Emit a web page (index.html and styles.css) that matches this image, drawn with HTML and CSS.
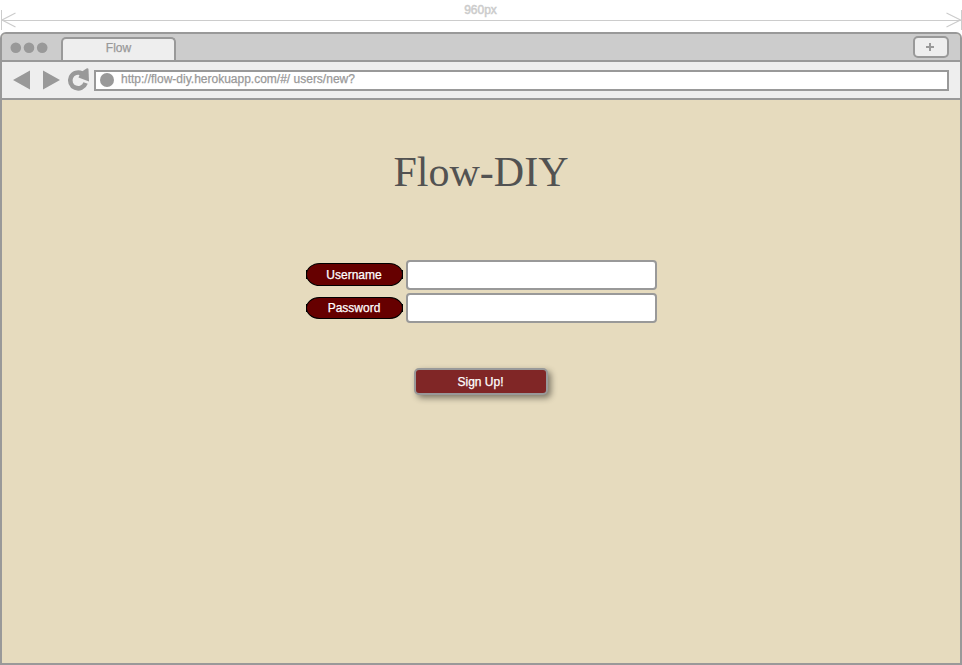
FILE: index.html
```html
<!DOCTYPE html>
<html lang="en">
<head>
<meta charset="utf-8">
<title>Flow</title>
<link rel="stylesheet" href="styles.css">
</head>
<body>
<div class="ruler">
  <svg class="ruler-line" width="962" height="32" viewBox="0 0 962 32" fill="none" stroke="#ccc">
    <path d="M1.5 10V30M961.5 10V30M2 20.5H961"/>
    <path d="M15.5 13L2 20L15.5 27M946.500 13L960.500 20L946.500 27" stroke-width="1.2"/>
  </svg>
  <span class="ruler-label">960px</span>
</div>
<div class="browser">
  <header class="tabs">
    <svg class="dots" width="51" height="26" viewBox="2 34 51 26" fill="#999"><circle cx="15.800" cy="47.800" r="5.300"/><circle cx="29" cy="47.800" r="5.300"/><circle cx="42.200" cy="47.800" r="5.300"/></svg>
    <div class="tab">Flow</div>
    <button class="new-tab" aria-label="New tab"><svg width="8" height="8" viewBox="0 0 8 8"><path d="M0 4H8M4 0V8" stroke="#999" stroke-width="2"/></svg></button>
  </header>
  <nav class="toolbar">
    <svg class="controls" width="92" height="36" viewBox="2 62 92 36">
      <path d="M13 80L30 70.500V89.500ZM60 80L43 70.500V89.500Z" fill="#999"/>
      <path d="M82 73.500A7.900 7.900 0 1 0 85.600 83" fill="none" stroke="#999" stroke-width="4.600"/>
      <path d="M78.500 77.500L80.500 72.500L86.500 68.500Q88.300 67.500 88.500 69.500L89 81.500Z" fill="#999"/>
    </svg>
    <div class="address"><i class="favicon"></i><span>http://flow-diy.herokuapp.com/#/ users/new?</span></div>
  </nav>
  <main class="page">
    <h1>Flow-DIY</h1>
    <form class="signup">
      <div class="row"><label class="pill" for="username">Username</label><input id="username" type="text"></div>
      <div class="row"><label class="pill pill-short" for="password">Password</label><input id="password" type="password"></div>
      <button class="submit" type="button">Sign Up!</button>
    </form>
  </main>
</div>
</body>
</html>
```

FILE: styles.css
```css
* { box-sizing: border-box; }
body {
  margin: 0;
  width: 962px;
  height: 665px;
  overflow: hidden;
  background: #fff;
  font: 12px/14px "Liberation Sans", Arial, sans-serif;
}
button, input { font: inherit; margin: 0; padding: 0; }
svg { display: block; flex: none; }
.ruler { position: relative; height: 32px; }
.ruler-label {
  position: absolute;
  top: 3px;
  left: 0;
  width: 961px;
  text-align: center;
  color: #ccc;
  -webkit-text-stroke: .5px #ccc;
}
.browser {
  display: flex;
  flex-direction: column;
  height: 633px;
  border: 2px solid #999;
  border-radius: 6px 6px 0 0;
  overflow: hidden;
  background: #e6dbbe;
}
.tabs {
  display: flex;
  height: 28px;
  flex: none;
  padding: 0 11px 0 0;
  border-bottom: 2px solid #999;
  background: #ccc;
}
.dots { margin-right: 8px; }
.tab {
  width: 115px;
  height: 23px;
  margin-top: 3px;
  padding-top: 2px;
  border: 2px solid #999;
  border-bottom: 0;
  border-radius: 5px 5px 0 0;
  background: #eee;
  color: #999;
  text-align: center;
  -webkit-text-stroke: .25px #999;
}
.new-tab {
  display: flex;
  align-items: center;
  justify-content: center;
  width: 36px;
  height: 22px;
  margin: 2px 0 0 auto;
  padding: 0 2px 1px 0;
  border: 2px solid #999;
  border-radius: 5px;
  background: #eee;
}
.toolbar {
  display: flex;
  flex: none;
  height: 38px;
  padding-right: 11px;
  border-bottom: 2px solid #999;
  background: #eee;
}
.address {
  display: flex;
  flex: 1;
  height: 21px;
  margin-top: 8px;
  padding-left: 4px;
  border: 2px solid #999;
  background: #fff;
  color: #999;
  -webkit-text-stroke: .25px #999;
}
.favicon { width: 14px; height: 14px; margin: 1px 7px 0 0; border-radius: 50%; background: #999; }
h1 {
  margin: 48px 0 0;
  color: #525252;
  font: 42px/48px "Liberation Serif", "Times New Roman", serif;
  text-align: center;
}
.signup { display: flex; flex-direction: column; gap: 3px; margin: 64px 0 0 304px; }
.row { display: flex; align-items: center; gap: 3px; height: 30px; }
.pill {
  position: relative;
  width: 97px;
  height: 23px;
  margin-bottom: 1px;
  padding-right: 1px;
  border: 1px solid #000;
  border-radius: 14px / 11.500px;
  background: #600;
  color: #fff;
  line-height: 22px;
  text-align: center;
  -webkit-text-stroke: .25px #fff;
}
/* Dark caps where the rounded ends meet the sides */
.pill::before {
  content: "";
  position: absolute;
  inset: 6px -1px;
  border: solid #000;
  border-width: 0 1px;
}
.pill-short { height: 22px; margin-bottom: 0; line-height: 20px; }
.row input { width: 251px; height: 30px; border: 2px solid #999; border-radius: 4px; background: #fff; }
.submit {
  width: 134px;
  height: 27px;
  margin: 42px 0 0 108px;
  padding: 1px 1px 0 0;
  border: 2px solid #999;
  border-radius: 5px;
  background: #802626;
  color: #fff;
  box-shadow: 3px 3px 6px rgba(0, 0, 0, .45);
  -webkit-text-stroke: .25px #fff;
}
```
